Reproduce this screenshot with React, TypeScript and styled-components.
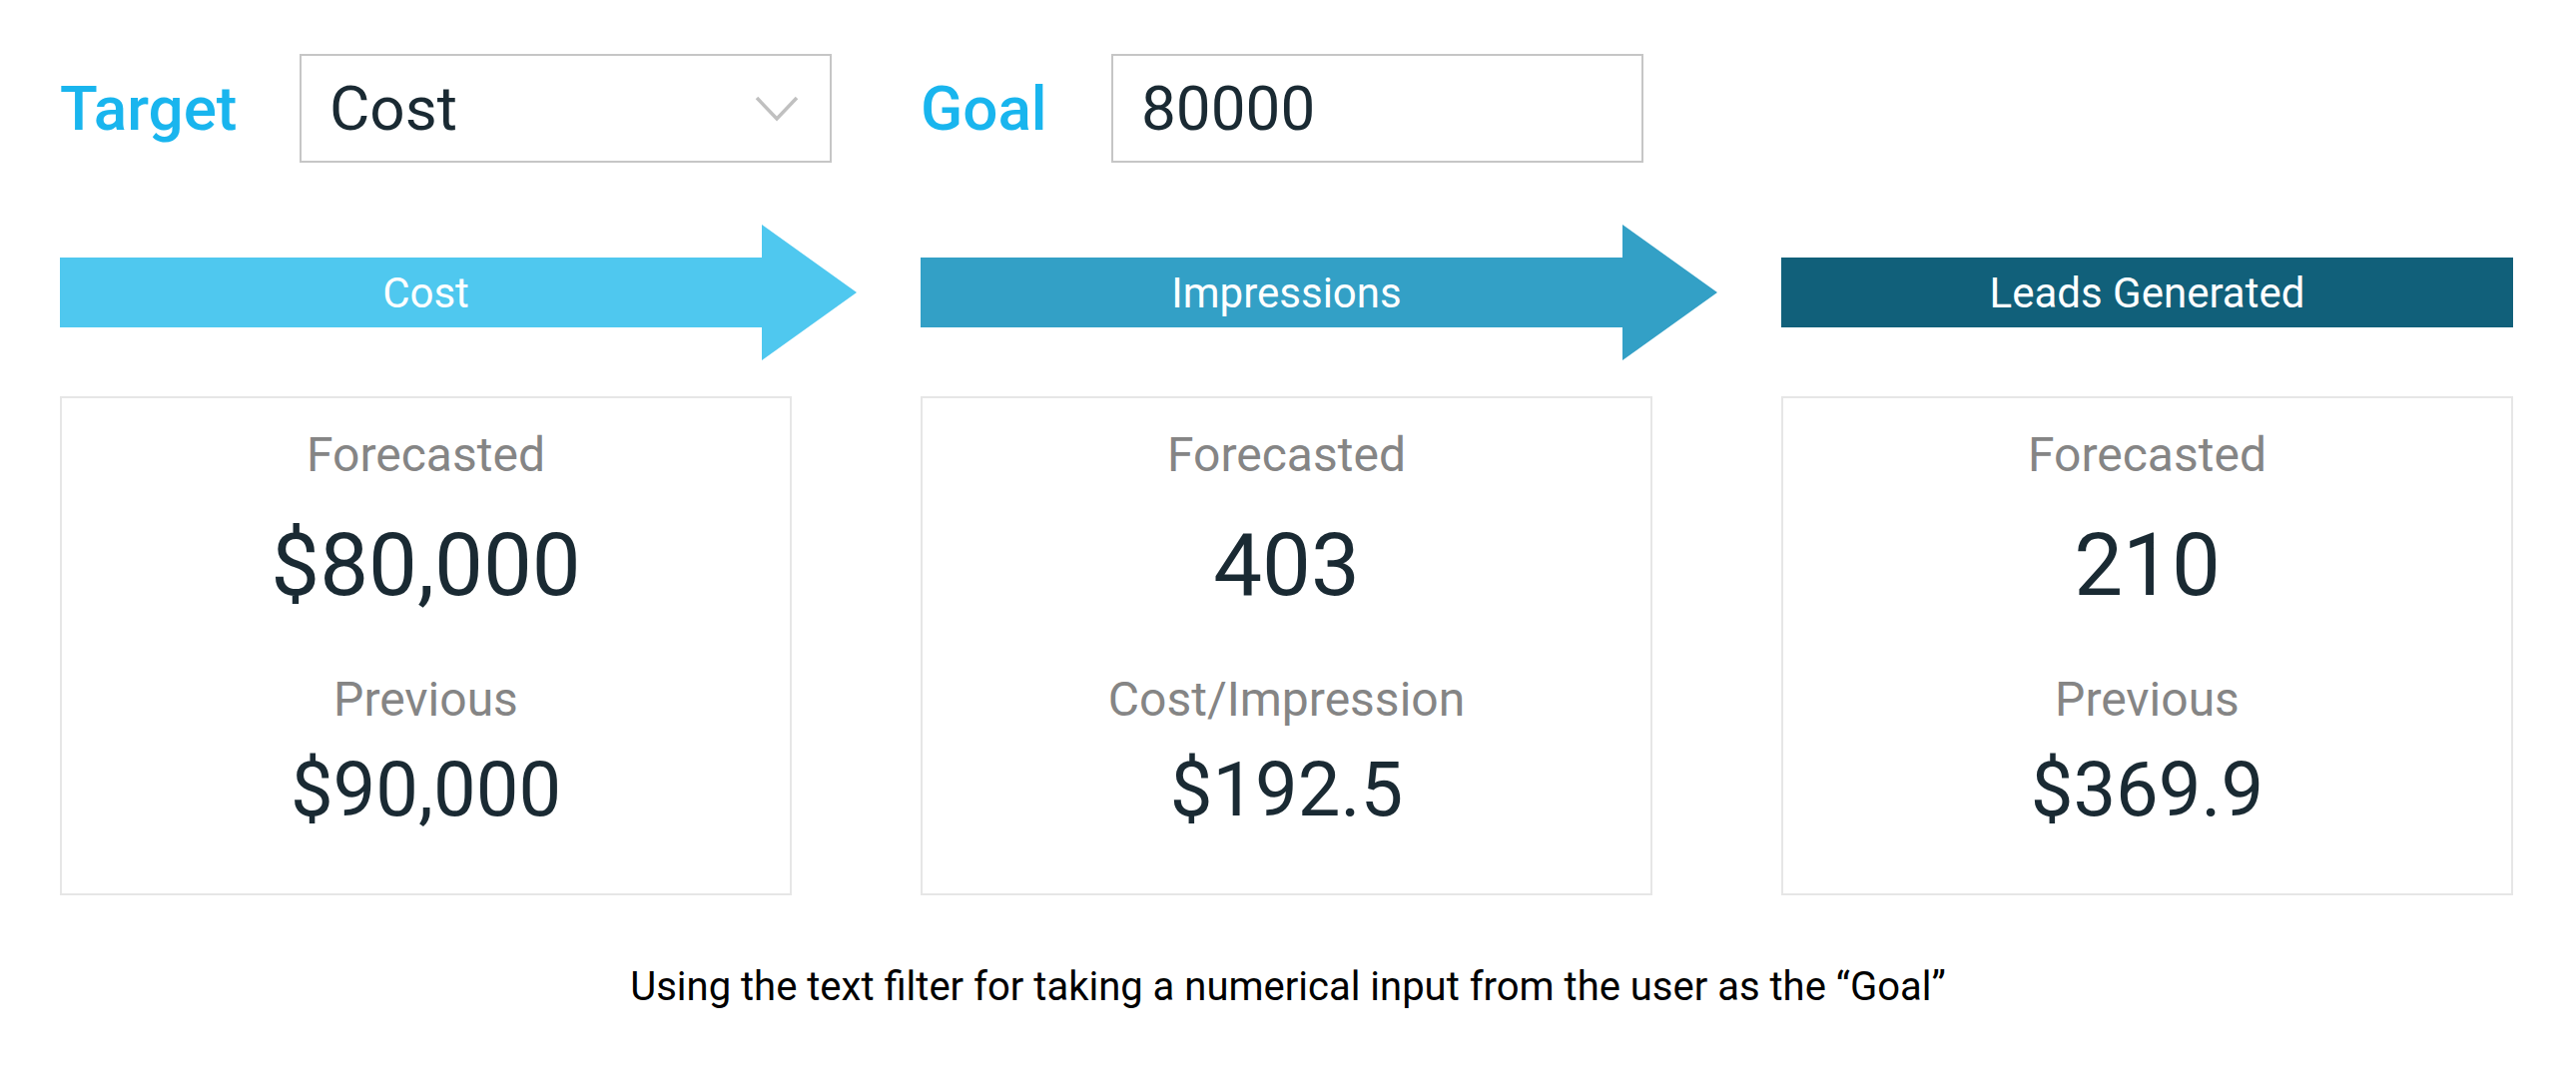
import React from "react";
import styled, { createGlobalStyle } from "styled-components";

const GlobalStyle = createGlobalStyle`
  html, body {
    margin: 0;
    padding: 0;
    background: #ffffff;
    font-family: Roboto, "Liberation Sans", Arial, sans-serif;
  }
`;

const Page = styled.div`
  padding: 54px 60px 0;
  box-sizing: border-box;
  width: 2580px;
`;

const FilterRow = styled.div`
  display: flex;
  align-items: center;
  height: 109px;
`;

const FilterLabel = styled.label<{ $width: number; $gap?: number }>`
  width: ${({ $width }) => $width}px;
  margin-left: ${({ $gap }) => $gap ?? 0}px;
  font-size: 62px;
  font-weight: 500;
  color: #19b5ee;
  flex-shrink: 0;
`;

const SelectBox = styled.div`
  width: 533px;
  height: 109px;
  box-sizing: border-box;
  border: 2px solid #c6c6c6;
  display: flex;
  align-items: center;
  justify-content: space-between;
  padding: 0 31px 0 28px;
  font-size: 62px;
  color: #1a2a33;
  background: #fff;
`;

const TextInput = styled.input`
  width: 533px;
  height: 109px;
  box-sizing: border-box;
  border: 2px solid #c6c6c6;
  padding: 0 28px;
  font-family: Roboto, "Liberation Sans", Arial, sans-serif;
  font-size: 62px;
  color: #1a2a33;
  outline: none;
  background: #fff;
`;

const Stages = styled.div`
  display: grid;
  grid-template-columns: repeat(3, 733px);
  column-gap: 129px;
  margin-top: 62px;
`;

const Stage = styled.div`
  display: flex;
  flex-direction: column;
`;

const Arrow = styled.div`
  display: flex;
  align-items: center;
  width: 733px;
  height: 136px;
  overflow: visible;
`;

const ArrowBody = styled.div<{ $color: string; $pointed: boolean }>`
  flex: 0 0 ${({ $pointed }) => ($pointed ? 703 : 733)}px;
  height: 70px;
  background: ${({ $color }) => $color};
  display: flex;
  align-items: center;
  justify-content: center;
  padding-left: ${({ $pointed }) => ($pointed ? 30 : 0)}px;
  box-sizing: border-box;
  color: #ffffff;
  font-size: 42px;
`;

const ArrowHead = styled.svg`
  flex: 0 0 95px;
  width: 95px;
  height: 136px;
  display: block;
`;

const Card = styled.div`
  margin-top: 36px;
  height: 500px;
  box-sizing: border-box;
  border: 2px solid #e6e6e6;
  padding-top: 29px;
  display: flex;
  flex-direction: column;
  align-items: center;
  text-align: center;
`;

const MetricLabel = styled.div<{ $top: number }>`
  margin-top: ${({ $top }) => $top}px;
  font-size: 48px;
  line-height: 56px;
  color: #858585;
`;

const MetricValue = styled.div<{ $size: number; $line: number; $top: number }>`
  margin-top: ${({ $top }) => $top}px;
  font-size: ${({ $size }) => $size}px;
  line-height: ${({ $line }) => $line}px;
  color: #1a2a33;
`;

const Caption = styled.p`
  margin: 68px 0 0;
  text-align: center;
  font-size: 40px;
  line-height: 48px;
  color: #000000;
`;

type StageData = {
  title: string;
  color: string;
  pointed: boolean;
  forecast: string;
  secondLabel: string;
  secondValue: string;
};

const stages: StageData[] = [
  {
    title: "Cost",
    color: "#4fc8ef",
    pointed: true,
    forecast: "$80,000",
    secondLabel: "Previous",
    secondValue: "$90,000",
  },
  {
    title: "Impressions",
    color: "#33a0c6",
    pointed: true,
    forecast: "403",
    secondLabel: "Cost/Impression",
    secondValue: "$192.5",
  },
  {
    title: "Leads Generated",
    color: "#11607a",
    pointed: false,
    forecast: "210",
    secondLabel: "Previous",
    secondValue: "$369.9",
  },
];

const Chevron = () => (
  <svg width="44" height="26" viewBox="0 0 44 26">
    <polyline
      points="2,2 22,23 42,2"
      fill="none"
      stroke="#c0c0c0"
      strokeWidth="3.5"
    />
  </svg>
);

export default function App() {
  return (
    <Page>
      <GlobalStyle />
      <FilterRow>
        <FilterLabel $width={240}>Target</FilterLabel>
        <SelectBox>
          <span>Cost</span>
          <Chevron />
        </SelectBox>
        <FilterLabel $width={191} $gap={89}>
          Goal
        </FilterLabel>
        <TextInput defaultValue="80000" />
      </FilterRow>

      <Stages>
        {stages.map((s) => (
          <Stage key={s.title}>
            <Arrow>
              <ArrowBody $color={s.color} $pointed={s.pointed}>
                {s.title}
              </ArrowBody>
              {s.pointed && (
                <ArrowHead viewBox="0 0 95 136">
                  <polygon points="0,0 95,68 0,136" fill={s.color} />
                </ArrowHead>
              )}
            </Arrow>
            <Card>
              <MetricLabel $top={0}>Forecasted</MetricLabel>
              <MetricValue $size={87} $line={100} $top={32}>
                {s.forecast}
              </MetricValue>
              <MetricLabel $top={57}>{s.secondLabel}</MetricLabel>
              <MetricValue $size={76} $line={90} $top={17}>
                {s.secondValue}
              </MetricValue>
            </Card>
          </Stage>
        ))}
      </Stages>

      <Caption>
        Using the text filter for taking a numerical input from the user as the “Goal”
      </Caption>
    </Page>
  );
}
